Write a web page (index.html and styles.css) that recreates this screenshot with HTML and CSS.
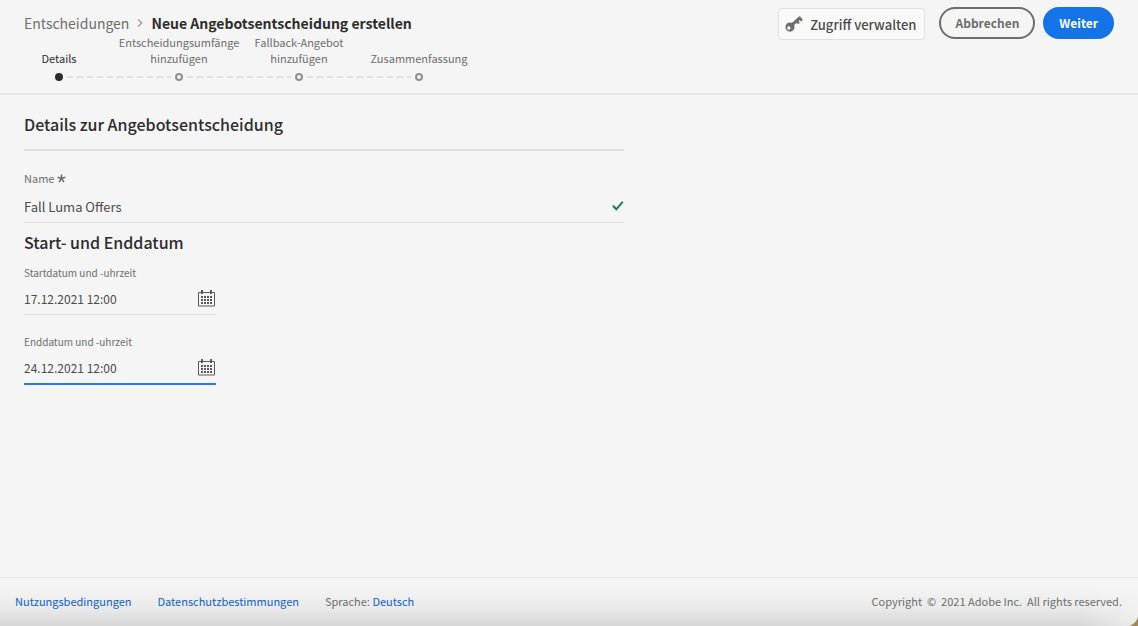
FILE: index.html
```html
<!DOCTYPE html>
<html lang="de">
<head>
    <meta charset="UTF-8">
    <meta name="viewport" content="width=device-width, initial-scale=1.0">
    <title>Neue Angebotsentscheidung erstellen</title>
    <link rel="stylesheet" href="styles.css">
</head>
<body>
    <div class="page">
        <header class="header">
            <div class="header-left">
                <nav class="breadcrumb">
                    <a href="#" class="breadcrumb-link">Entscheidungen</a>
                    <svg class="breadcrumb-chevron" viewBox="0 0 6 10"><path d="M1.2 1.5 4.6 5 1.2 8.5"/></svg>
                    <h1 class="breadcrumb-title">Neue Angebotsentscheidung erstellen</h1>
                </nav>
                <ol class="steps">
                    <li class="step active"><span class="step-label">Details</span><span class="step-dot"></span></li>
                    <li class="step"><span class="step-label">Entscheidungsumfänge hinzufügen</span><span class="step-dot"></span></li>
                    <li class="step"><span class="step-label">Fallback-Angebot hinzufügen</span><span class="step-dot"></span></li>
                    <li class="step"><span class="step-label">Zusammenfassung</span><span class="step-dot"></span></li>
                </ol>
            </div>
            <div class="header-actions">
                <button type="button" class="access-button">
                    <svg class="key-icon" viewBox="0 0 18 16">
                        <path fill-rule="evenodd" d="M5 6.500a4.600 4.600 0 1 0 0 9.200a4.600 4.600 0 0 0 0-9.200zM3.800 10.300a1.700 1.700 0 1 1 0 3.400a1.700 1.700 0 0 1 0-3.400z"/>
                        <path d="M6 7.800 14.200.3 15.800 1 17.800 3.900 16.200 5.600 14.700 4.300 13.600 5.300 14.800 6.900 13.300 8.100 11.500 7 8.600 9.600z"/>
                    </svg>
                    Zugriff verwalten
                </button>
                <button type="button" class="pill-button secondary">Abbrechen</button>
                <button type="button" class="pill-button primary">Weiter</button>
            </div>
        </header>

        <main class="content">
            <form class="form">
                <h2 class="section-title ruled">Details zur Angebotsentscheidung</h2>
                <div class="field name-field">
                    <label class="field-label" for="name">Name
                        <svg class="required-icon" viewBox="0 0 8 8"><path d="M4 4V.4M4 4 .6 2.900M4 4l3.400-1.100M4 4 1.900 7.200M4 4l2.100 3.200"/></svg>
                    </label>
                    <div class="field-box">
                        <input type="text" id="name" class="field-input" value="Fall Luma Offers">
                        <svg class="check-icon" viewBox="0 0 12 10"><path d="M1.500 5.300 4.300 8.300 10.200 1.300"/></svg>
                    </div>
                </div>
                <h2 class="section-title">Start- und Enddatum</h2>
                <div class="field date-field">
                    <label class="field-label" for="start">Startdatum und -uhrzeit</label>
                    <div class="field-box">
                        <input type="text" id="start" class="field-input" value="17.12.2021 12:00">
                        <button type="button" class="calendar-button" aria-label="Startdatum auswählen">
                            <svg class="calendar-icon" viewBox="0 0 17 17">
                                <path class="frame" d="M.5 2.500h16v13.500H.5z"/>
                                <path class="rings" d="M4 0v4M13 0v4"/>
                                <path class="days" d="M3 7h11M3 10h11M3 13h11"/>
                            </svg>
                        </button>
                    </div>
                </div>
                <div class="field date-field focused">
                    <label class="field-label" for="end">Enddatum und -uhrzeit</label>
                    <div class="field-box">
                        <input type="text" id="end" class="field-input" value="24.12.2021 12:00">
                        <button type="button" class="calendar-button" aria-label="Enddatum auswählen">
                            <svg class="calendar-icon" viewBox="0 0 17 17">
                                <path class="frame" d="M.5 2.500h16v13.500H.5z"/>
                                <path class="rings" d="M4 0v4M13 0v4"/>
                                <path class="days" d="M3 7h11M3 10h11M3 13h11"/>
                            </svg>
                        </button>
                    </div>
                </div>
            </form>
        </main>

        <footer class="footer">
            <div class="footer-links">
                <a href="#">Nutzungsbedingungen</a>
                <a href="#">Datenschutzbestimmungen</a>
                <span>Sprache: <a href="#">Deutsch</a></span>
            </div>
            <div class="copyright">Copyright &nbsp;© &nbsp;2021 Adobe Inc. &nbsp;All rights reserved.</div>
        </footer>
    </div>
</body>
</html>
```
FILE: styles.css
```css
* {
    box-sizing: border-box;
}

body {
    margin: 0;
    background-color: #a08a60;
    color: #4b4b4b;
    font-family: "Noto Sans CJK SC", "Open Sans", sans-serif;
    font-size: 12px;
    line-height: 16px;
}

a {
    color: #0d5fd3;
    text-decoration: none;
}

button,
input {
    font-family: inherit;
}

.page {
    display: flex;
    flex-direction: column;
    min-height: 100vh;
    background-color: #f5f5f5;
    border-bottom-right-radius: 12px;
    overflow: hidden;
}

.header {
    display: flex;
    justify-content: space-between;
    align-items: flex-start;
    height: 95px;
    border-bottom: 2px solid #e8e8e8;
}

.breadcrumb {
    display: flex;
    align-items: center;
    gap: 8px;
    padding: 12px 0 0 24px;
    line-height: 22px;
}

.breadcrumb-link {
    color: #6e6e6e;
    font-size: 14px;
}

.breadcrumb-chevron {
    width: 6px;
    height: 10px;
    fill: none;
    stroke: #a0a0a0;
    stroke-width: 1.5;
}

.breadcrumb-title {
    margin: 0;
    color: #2c2c2c;
    font-size: 14px;
    font-weight: 700;
}

.steps {
    display: flex;
    margin: 0 0 0 -1px;
    padding: 0;
    list-style: none;
}

.step {
    position: relative;
    display: flex;
    flex-direction: column;
    align-items: center;
    justify-content: flex-end;
    gap: 7px;
    width: 120px;
    height: 47px;
    color: #6e6e6e;
    font-size: 11px;
    text-align: center;
}

.step-dot {
    width: 8px;
    height: 8px;
    border: 2px solid #909090;
    border-radius: 50%;
}

.step.active {
    color: #2c2c2c;
}

.step.active .step-dot {
    border-color: #2c2c2c;
    background-color: #2c2c2c;
}

/* dashed line to the next step */
.step:not(:last-child)::after {
    content: "";
    position: absolute;
    bottom: 3px;
    left: 68px;
    width: 104px;
    height: 2px;
    background: repeating-linear-gradient(to right, #e1e1e1 0 6px, transparent 6px 10px);
}

.header-actions {
    display: flex;
    align-items: flex-start;
    padding: 7px 24px 0 0;
}

.access-button {
    display: flex;
    align-items: center;
    gap: 7px;
    height: 32px;
    margin: 1px 14px 0 0;
    padding: 0 8px 0 6px;
    border: 1px solid #e1e1e1;
    border-radius: 4px;
    background-color: #fafafa;
    color: #4b4b4b;
    font-size: 13px;
    font-weight: 500;
}

.key-icon {
    width: 18px;
    height: 16px;
    fill: #6e6e6e;
}

.pill-button {
    height: 32px;
    padding: 0 14px;
    border: 2px solid #6e6e6e;
    border-radius: 16px;
    background-color: transparent;
    color: #6e6e6e;
    font-size: 12px;
    font-weight: 700;
    line-height: 16px;
}

.pill-button.primary {
    margin-left: 8px;
    border-color: #1473e6;
    background-color: #1473e6;
    color: #fff;
}

.content {
    flex: 1;
    padding: 17px 24px;
}

.form {
    max-width: 600px;
}

.section-title {
    margin: 0;
    color: #2c2c2c;
    font-size: 16px;
    font-weight: 500;
    line-height: 24px;
}

.section-title.ruled {
    padding-bottom: 13px;
    border-bottom: 2px solid #e1e1e1;
}

.field-label {
    display: block;
    color: #6e6e6e;
    font-size: 11px;
}

.required-icon {
    width: 9px;
    height: 9px;
    fill: none;
    stroke: #6e6e6e;
    stroke-width: 1.4;
}

.field-box {
    display: flex;
    align-items: center;
    height: 34px;
    padding-top: 2px;
    border-bottom: 1px solid #e1e1e1;
}

.field-input {
    flex: 1;
    min-width: 0;
    padding: 0;
    border: none;
    outline: none;
    background: none;
    color: #4b4b4b;
    font-size: 12px;
}

.name-field {
    margin: 19px 0 7px;
}

.name-field .field-box {
    height: 37px;
    padding-top: 4px;
}

.name-field .field-input {
    font-size: 13px;
}

.check-icon {
    width: 12px;
    height: 10px;
    fill: none;
    stroke: #12805c;
    stroke-width: 2;
    stroke-linecap: round;
}

.date-field {
    width: 192px;
    margin-top: 11px;
}

.date-field .field-label {
    font-size: 10px;
}

.date-field + .date-field {
    margin-top: 19px;
}

.focused .field-box {
    height: 35px;
    border-bottom: 2px solid #2680eb;
}

.calendar-button {
    display: flex;
    padding: 0 1px 0 0;
    border: none;
    background: none;
}

.calendar-icon {
    width: 17px;
    height: 17px;
    fill: none;
    stroke: #5a5a5a;
}

.calendar-icon .frame {
    stroke-width: 1;
}

.calendar-icon .rings {
    stroke-width: 2;
}

.calendar-icon .days {
    stroke-width: 2;
    stroke-dasharray: 2 1;
}

.footer {
    display: flex;
    justify-content: space-between;
    align-items: center;
    height: 49px;
    padding: 0 16px 2px 15px;
    border-top: 1px solid #e8e8e8;
    background:
        linear-gradient(to left, rgba(245, 245, 245, 0.7), rgba(245, 245, 245, 0) 60px),
        linear-gradient(to bottom, #f5f5f5 15%, #ebebeb 60%, #d7d7d7);
    color: #6e6e6e;
    font-size: 11px;
}

.footer-links {
    display: flex;
    gap: 26px;
}
```
